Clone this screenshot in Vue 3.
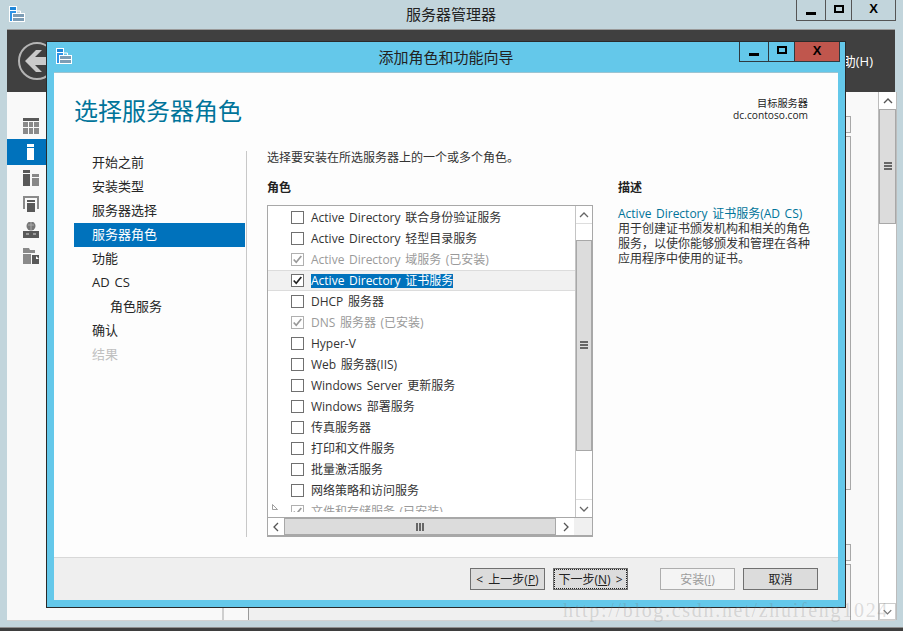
<script setup>
const navItems = [
  { t: '开始之前' }, { t: '安装类型' }, { t: '服务器选择' }, { t: '服务器角色', on: true },
  { t: '功能' }, { t: 'AD CS' }, { t: '角色服务', sub: true }, { t: '确认' }, { t: '结果', off: true }
]
const roles = [
  { t: 'Active Directory 联合身份验证服务' },
  { t: 'Active Directory 轻型目录服务' },
  { t: 'Active Directory 域服务 (已安装)', dis: true },
  { t: 'Active Directory 证书服务', sel: true },
  { t: 'DHCP 服务器' },
  { t: 'DNS 服务器 (已安装)', dis: true },
  { t: 'Hyper-V' },
  { t: 'Web 服务器(IIS)' },
  { t: 'Windows Server 更新服务' },
  { t: 'Windows 部署服务' },
  { t: '传真服务器' },
  { t: '打印和文件服务' },
  { t: '批量激活服务' },
  { t: '网络策略和访问服务' },
  { t: '文件和存储服务 (已安装)', dis: true, tree: true }
]
</script>

<template>
  <div class="screen">
    <div class="titlebar">
      <svg class="appicon" viewBox="0 0 16 16" width="16" height="16">
        <rect x="0" y="0" width="8" height="16" fill="#fff" />
        <rect x="1" y="1" width="6" height="3" fill="#1f86d8" />
        <rect x="1" y="5" width="6" height="10" fill="#2e93e6" />
        <path d="M3 7h13v9H3z" fill="#fff" />
        <path d="M4 8h11v7H4z" fill="#7d9db5" />
        <path d="M7.5 7V5h4v2" fill="none" stroke="#fff" stroke-width="1" />
        <path d="M4 11.5h11" stroke="#fff" stroke-width="1" />
      </svg>
      <span class="apptitle">服务器管理器</span>
      <div class="winbtns main">
        <span class="wb min"><i class="g-min"></i></span>
        <span class="wb max"><i class="g-max"></i></span>
        <span class="wb close"><span class="g-x">X</span></span>
      </div>
    </div>

    <div class="manager">
      <div class="mhead">
        <svg class="back" viewBox="0 0 40 40" width="40" height="40">
          <circle cx="20" cy="20" r="18" fill="none" stroke="#b4b4b4" stroke-width="2" />
          <path d="M8 20L19 9h6l-7 7h22v8H18l7 7h-6z" fill="#cacaca" />
        </svg>
        <span class="mhelp">助(H)</span>
      </div>
      <div class="mbody">
        <div class="side">
          <div class="sitem">
            <svg viewBox="0 0 16 16" width="16" height="16"><rect width="16" height="3" fill="#595959"/><path d="M0 4h5v5H0zM6 4h4v5H6zM11 4h5v5h-5zM0 10h5v6H0zM6 10h4v6H6zM11 10h5v6h-5z" fill="#8a8a8a"/></svg>
          </div>
          <div class="sitem on">
            <svg viewBox="0 0 16 16" width="16" height="16"><rect x="4" y="0" width="7" height="3" fill="#fff"/><rect x="4" y="4" width="7" height="12" fill="#fff"/></svg>
          </div>
          <div class="sitem">
            <svg viewBox="0 0 16 16" width="16" height="16"><rect width="7" height="3" fill="#595959"/><rect y="4" width="7" height="12" fill="#595959"/><rect x="9" y="4" width="7" height="3" fill="#888"/><rect x="9" y="8" width="7" height="8" fill="#888"/></svg>
          </div>
          <div class="sitem">
            <svg viewBox="0 0 16 16" width="16" height="16"><path d="M0 0h4v2H2v11H0zM12 0h4v13h-2V2h-2z" fill="#8a8a8a"/><rect x="4" y="0" width="8" height="2" fill="#8a8a8a"/><rect x="4" y="4" width="8" height="2" fill="#595959"/><rect x="4" y="7" width="8" height="9" fill="#595959"/></svg>
          </div>
          <div class="sitem">
            <svg viewBox="0 0 16 16" width="16" height="16"><circle cx="8" cy="4" r="4.5" fill="#777"/><path d="M5 3h6M8 0v8" stroke="#aaa" stroke-width="1"/><rect y="9" width="16" height="7" fill="#595959"/><path d="M3 12h3M10 12h3" stroke="#ddd" stroke-width="1"/></svg>
          </div>
          <div class="sitem">
            <svg viewBox="0 0 16 16" width="16" height="16"><path d="M0 0h6l1 2h5v3H0z" fill="#8a8a8a"/><path d="M0 6h8v10H0z" fill="#8a8a8a"/><rect x="9" y="7" width="7" height="9" fill="#595959"/><path d="M13 8l3 3h-3z" fill="#fff"/></svg>
          </div>
        </div>
        <div class="gutter"></div>
        <div class="mmain">
          <div class="col">
            <div class="bx b1"></div>
            <div class="bx b2"></div>
            <div class="bx b3"></div>
            <div class="bx b4"></div>
          </div>
          <div class="pagebar">
            <span class="pbtn"><svg viewBox="0 0 16 16" width="16" height="16"><path d="M4 10l4-4 4 4" fill="none" stroke="#555" stroke-width="1.4"/></svg></span>
            <div class="pthumb"><span class="grip-h"></span></div>
            <div class="ptrack"></div>
            <span class="pbtn down"><svg viewBox="0 0 16 16" width="16" height="16"><path d="M4 6l4 4 4-4" fill="none" stroke="#777" stroke-width="1.4"/></svg></span>
          </div>
        </div>
      </div>
    </div>
    <div class="bottomedge"></div>

    <div class="dialog">
      <div class="dtitle">
        <svg class="dicon" viewBox="0 0 16 16" width="16" height="16">
          <rect x="0" y="0" width="8" height="16" fill="#fff" />
          <rect x="1" y="1" width="6" height="3" fill="#1f86d8" />
          <rect x="1" y="5" width="6" height="10" fill="#2e93e6" />
          <path d="M3 7h13v9H3z" fill="#fff" />
          <path d="M4 8h11v7H4z" fill="#7d9db5" />
          <path d="M7.5 7V5h4v2" fill="none" stroke="#fff" stroke-width="1" />
          <path d="M4 11.5h11" stroke="#fff" stroke-width="1" />
        </svg>
        <span class="dtext">添加角色和功能向导</span>
        <div class="winbtns dlg">
          <span class="wb min"><i class="g-min"></i></span>
          <span class="wb max"><i class="g-max"></i></span>
          <span class="wb close red"><span class="g-x">X</span></span>
        </div>
      </div>
      <div class="panel">
        <div class="phead">
          <h1>选择服务器角色</h1>
          <div class="target">
            <div>目标服务器</div>
            <div>dc.contoso.com</div>
          </div>
        </div>
        <div class="pcols">
          <nav class="steps">
            <div v-for="n in navItems" :key="n.t" class="step" :class="{ on: n.on, sub: n.sub, off: n.off }">{{ n.t }}</div>
          </nav>
          <div class="center">
            <div class="intro">选择要安装在所选服务器上的一个或多个角色。</div>
            <div class="cap">角色</div>
            <div class="listbox">
              <div class="listtop">
                <div class="rows">
                  <div v-for="r in roles" :key="r.t" class="row" :class="{ sel: r.sel, dis: r.dis }">
                    <svg v-if="r.tree" class="tri" viewBox="0 0 6 6" width="6" height="6"><path d="M.5.5v5h5z" fill="none" stroke="#888" stroke-width=".8"/></svg>
                    <span class="cb">
                      <svg v-if="r.sel || r.dis" viewBox="0 0 13 13" width="11" height="11"><path d="M2 6.5l3 3.2 6-7.4" fill="none" :stroke="r.dis ? '#999' : '#222'" stroke-width="2"/></svg>
                    </span>
                    <span class="lbl">{{ r.t }}</span>
                  </div>
                </div>
                <div class="vbar">
                  <span class="sb"><svg viewBox="0 0 16 16" width="16" height="16"><path d="M4 10l4-4 4 4" fill="none" stroke="#666" stroke-width="1.3"/></svg></span>
                  <div class="vgap1"></div>
                  <div class="vthumb"><span class="grip-h"></span></div>
                  <div class="vgap2"></div>
                  <span class="sb last"><svg viewBox="0 0 16 16" width="16" height="16"><path d="M4 6l4 4 4-4" fill="none" stroke="#666" stroke-width="1.3"/></svg></span>
                </div>
              </div>
              <div class="hbar">
                <span class="hb"><svg viewBox="0 0 16 16" width="16" height="16"><path d="M10 4L6 8l4 4" fill="none" stroke="#555" stroke-width="1.3"/></svg></span>
                <div class="hthumb"><span class="grip-v"></span></div>
                <span class="hb last"><svg viewBox="0 0 16 16" width="16" height="16"><path d="M6 4l4 4-4 4" fill="none" stroke="#555" stroke-width="1.3"/></svg></span>
                <span class="corner"></span>
              </div>
            </div>
          </div>
          <aside class="desc">
            <div class="cap">描述</div>
            <div class="dlink">Active Directory 证书服务(AD CS)</div>
            <div class="dbody">用于创建证书颁发机构和相关的角色服务，以使你能够颁发和管理在各种应用程序中使用的证书。</div>
          </aside>
        </div>
        <div class="footer">
          <button class="btn">&lt; 上一步(<u>P</u>)</button>
          <button class="btn focus">下一步(<u>N</u>) &gt;</button>
          <button class="btn disabled">安装(<u>I</u>)</button>
          <button class="btn">取消</button>
        </div>
      </div>
    </div>

    <div class="watermark">http://blog.csdn.net/zhuifeng1024</div>
  </div>
</template>

<style>
html, body { margin: 0; padding: 0; overflow: hidden; }
</style>

<style scoped>
.screen {
  position: relative;
  width: 903px;
  height: 631px;
  overflow: hidden;
  background: #c2d5dc;
  font-family: "Open Sans", "Noto Sans CJK SC", sans-serif;
  font-size: 12px;
  color: #262626;
  display: flex;
  flex-direction: column;
}
.titlebar {
  height: 29px;
  flex: none;
  display: flex;
  align-items: flex-start;
  justify-content: center;
  position: relative;
}
.appicon { position: absolute; left: 9px; top: 6px; }
.apptitle { font-size: 15px; line-height: 28px; color: #222; margin-left: -1px; }
.winbtns { position: absolute; display: flex; border: 1px solid #555; border-top: 0; box-sizing: border-box; }
.winbtns.main { left: 796px; top: 0; height: 21px; width: 100px; }
.wb { display: flex; align-items: center; justify-content: center; box-sizing: border-box; height: 100%; position: relative; }
.wb + .wb { border-left: 1px solid #555; }
.main .min { width: 28px; }
.main .max { width: 26px; }
.main .close { flex: 1; }
.g-min { display: block; width: 10px; height: 3px; background: #000; margin-top: 6px; }
.g-max { display: block; width: 10px; height: 8px; box-sizing: border-box; border: 2px solid #000; margin-top: -3px; }
.g-x { font: bold 13px/13px "Liberation Sans", sans-serif; color: #000; margin-top: -3px; }

.manager {
  margin: 0 8px 0 7px;
  height: 591px;
  flex: none;
  display: flex;
  flex-direction: column;
  border-top: 1px solid #9a9a9a;
  box-sizing: border-box;
}
.bottomedge {
  margin-top: 7px;
  height: 4px;
  flex: none;
  background: #3e3e3e;
  border-top: 1px solid #8f8f8f;
  box-sizing: border-box;
}
.mhead {
  height: 62px;
  flex: none;
  background: #404040;
  position: relative;
  display: flex;
  align-items: center;
  justify-content: flex-end;
}
.back { position: absolute; left: 10px; top: 11px; }
.mhelp { color: #fff; font-size: 13px; margin-right: 22px; margin-top: -1px; }
.mbody { height: 528px; flex: none; display: flex; background: #f9f9f9; box-shadow: 0 1px #d2d2d2; }
.side {
  flex: none;
  padding-top: 21px;
  box-sizing: border-box;
  border-right: 2px solid #cfcfcf;
  width: 217px;
}
.sitem { height: 26px; padding-left: 16px; display: flex; align-items: center; }
.sitem.on { background: #0072bc; width: 40px; box-sizing: border-box; }
.gutter { width: 24px; flex: none; border-right: 1px solid #9a9a9a; }
.mmain { flex: 1; display: flex; }
.col { width: 602px; flex: none; position: relative; display: flex; flex-direction: column; padding-top: 24px; box-sizing: border-box; }
.bx { border: 1px solid #a8a8a8; border-left: 0; box-sizing: border-box; background: #f0f0f0; }
.b1 { height: 17px; }
.b2 { height: 354px; margin-top: 3px; }
.b3 { height: 17px; margin-top: 54px; }
.b4 { flex: 1; margin-top: 3px; border-bottom: 0; }
.pagebar {
  width: 17px;
  margin-left: 27px;
  flex: none;
  background: #fff;
  display: flex;
  flex-direction: column;
  border-left: 1px solid #bcbcbc;
  border-right: 1px solid #bcbcbc;
  box-sizing: content-box;
}
.pbtn { height: 17px; display: flex; align-items: center; justify-content: center; background: #fff; flex: none; }
.pbtn.down { border: 1px solid #ccc; box-sizing: border-box; }
.pthumb {
  height: 115px;
  flex: none;
  background: #dcdcdc;
  border: 1px solid #a8a8a8;
  box-sizing: border-box;
  display: flex;
  align-items: center;
  justify-content: center;
}
.ptrack { flex: 1; }
.grip-h { display: block; width: 8px; height: 9px; background: repeating-linear-gradient(to bottom, #666 0 2px, #dcdcdc 2px 3px); }
.grip-v { display: block; width: 9px; height: 8px; background: repeating-linear-gradient(to right, #666 0 2px, #dcdcdc 2px 3px); }

.dialog {
  position: absolute;
  left: 46px;
  top: 41px;
  width: 800px;
  height: 567px;
  box-sizing: border-box;
  background: #64c8ea;
  border: 1px solid #2a2a2a;
  padding: 0 7px 7px;
  display: flex;
  flex-direction: column;
}
.dtitle { height: 30px; flex: none; position: relative; display: flex; justify-content: center; align-items: center; }
.dicon { position: absolute; left: 2px; top: 6px; }
.dtext { font-size: 15px; color: #222; margin-top: -1px; }
.winbtns.dlg { left: 685px; top: 0; width: 101px; height: 20px; border-color: #2e3a40; }
.dlg .wb + .wb { border-left-color: #2e3a40; }
.dlg .min { width: 28px; }
.dlg .max { width: 26px; }
.dlg .close { flex: 1; }
.red { background: #c0564d; }
.panel { flex: 1; background: #fdfdfd; display: flex; flex-direction: column; border-top: 1px solid #9cc4d2; min-height: 0; }
.phead { height: 78px; flex: none; display: flex; justify-content: space-between; padding: 0 30px 0 20px; box-sizing: border-box; }
h1 { margin: 20px 0 0; font-size: 24px; font-weight: 400; line-height: 36px; color: #00749a; }
.target { margin-top: 24px; text-align: right; font-size: 10.2px; line-height: 12px; color: #222; }
.pcols { flex: 1; display: flex; min-height: 0; padding-left: 20px; }
.steps { width: 171px; flex: none; font-size: 13px; word-spacing: 1.5px; }
.step { height: 24px; line-height: 23px; padding-left: 18px; color: #262626; box-sizing: border-box; }
.step.on { background: #0072bc; color: #fff; }
.step.sub { padding-left: 36px; }
.step.off { color: #c0c0c0; }
.center {
  margin-left: 1px;
  border-left: 1px solid #c8c8c8;
  padding-left: 20px;
  width: 326px;
  flex: none;
  height: 386px;
  box-sizing: content-box;
}
.intro { height: 14px; line-height: 14px; color: #333; }
.cap { font-weight: 700; line-height: 16px; margin-top: 15px; color: #222; }
.listbox {
  margin-top: 9px;
  width: 326px;
  height: 332px;
  box-sizing: border-box;
  border: 1px solid #a8a8a8;
  border-bottom-width: 2px;
  display: flex;
  flex-direction: column;
  background: #fff;
}
.listtop { flex: 1; display: flex; min-height: 0; }
.rows { flex: 1; overflow: hidden; padding-top: 1px; min-width: 0; clip-path: inset(0 0 5px 0); }
.row { height: 21px; display: flex; align-items: center; padding-left: 23px; gap: 7px; position: relative; box-sizing: border-box; }
.row.sel { background: #f1f1f1; box-shadow: inset 0 1px #dcdcdc, inset 0 -1px #dcdcdc; }
.row.sel .lbl { background: #0072bc; color: #fff; line-height: 14px; }
.row.dis .lbl { color: #9a9a9a; }
.lbl { white-space: nowrap; line-height: 16px; color: #333; word-spacing: 1.5px; }
.cb {
  width: 13px;
  height: 13px;
  box-sizing: border-box;
  border: 1px solid #707070;
  background: #fff;
  flex: none;
  display: flex;
  align-items: center;
  justify-content: center;
}
.row.dis .cb { border-color: #b0b0b0; }
.tri { position: absolute; left: 4px; top: 3px; }
.vbar { width: 17px; flex: none; display: flex; flex-direction: column; border-left: 1px solid #c4c4c4; box-sizing: border-box; background: #fff; }
.sb { height: 17px; flex: none; display: flex; align-items: center; justify-content: center; box-shadow: 0 1px #ddd; }
.sb.last { box-shadow: 0 -1px #ddd; }
.vgap1 { height: 17px; flex: none; }
.vthumb { height: 211px; flex: none; background: #dcdcdc; border: 1px solid #a8a8a8; box-sizing: border-box; display: flex; align-items: center; justify-content: center; }
.vgap2 { flex: 1; }
.hbar { height: 17px; flex: none; display: flex; border-top: 1px solid #a8a8a8; box-sizing: content-box; background: #fff; }
.hb { width: 16px; flex: none; display: flex; align-items: center; justify-content: center; }
.hb.last { margin-left: 2px; }
.hthumb { width: 272px; flex: none; background: #dcdcdc; border: 1px solid #a8a8a8; box-sizing: border-box; display: flex; align-items: center; justify-content: center; }
.corner { flex: 1; background: #f0f0f0; }
.desc { margin-left: 25px; width: 194px; flex: none; line-height: 15px; }
.desc .cap { margin-top: 29px; }
.dlink { margin-top: 10px; color: #00749a; white-space: nowrap; word-spacing: 1.5px; }
.dbody { color: #333; }
.footer {
  height: 43px;
  flex: none;
  background: #efefef;
  border-top: 1px solid #d8d8d8;
  box-sizing: border-box;
  display: flex;
  align-items: center;
  justify-content: flex-end;
  padding: 0 20px 0 0;
  gap: 8px;
}
.btn {
  width: 75px;
  height: 22px;
  padding: 0;
  background: #dcdcdc;
  border: 1px solid #707070;
  font: inherit;
  color: #222;
  box-sizing: border-box;
  word-spacing: 2px;
}
.btn.focus { outline: 1px dotted #222; outline-offset: -2px; margin-right: 24px; }
.btn.disabled { background: #f4f4f4; border-color: #adadad; color: #9c9c9c; }
.watermark {
  position: absolute;
  left: 563px;
  top: 598px;
  font-family: "Liberation Serif", serif;
  font-size: 20px;
  letter-spacing: 1.7px;
  line-height: 24px;
  color: rgba(120, 120, 120, .24);
  white-space: nowrap;
  pointer-events: none;
}
</style>
